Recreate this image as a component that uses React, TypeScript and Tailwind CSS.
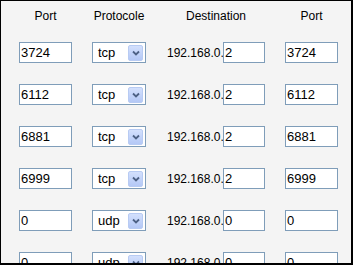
import React from "react";

const rows = [
  ["3724", "tcp", "2", "3724"],
  ["6112", "tcp", "2", "6112"],
  ["6881", "tcp", "2", "6881"],
  ["6999", "tcp", "2", "6999"],
  ["0", "udp", "0", "0"],
  ["0", "udp", "0", "0"],
];

function Box({ w, children }: { w: string; children: React.ReactNode }) {
  return (
    <div
      className={`${w} h-[21px] shrink-0 border border-[#7f9db9] bg-white pl-[1px] text-[13px] leading-[19px] text-black`}
    >
      {children}
    </div>
  );
}

function Select({ value }: { value: string }) {
  return (
    <div className="flex h-[21px] w-[54px] shrink-0 items-center justify-between border border-[#7f9db9] bg-white pl-[5px] pr-[2px] text-[13px] text-black">
      <span className="leading-[19px]">{value}</span>
      <div className="flex h-[16px] w-[15px] items-center justify-center rounded-[2px] border border-[#b8cbf3] bg-gradient-to-b from-[#d3e0fd] to-[#b4c8f6]">
        <svg width="8" height="6" viewBox="0 0 8 6">
          <polyline points="1,1.5 4,4.5 7,1.5" fill="none" stroke="#4d6185" strokeWidth="1.8" />
        </svg>
      </div>
    </div>
  );
}

export default function App() {
  return (
    <div
      className="h-[265px] w-[353px] overflow-hidden border-b-2 border-l border-r-2 border-t border-black bg-[#f4f4f4]"
      style={{ fontFamily: '"Liberation Sans", Arial, sans-serif' }}
    >
      <div className="flex pl-[18px] pt-[7px] text-[12px] leading-[16px] text-black">
        <div className="w-[53px] text-center">Port</div>
        <div className="ml-[20px] w-[54px] text-center">Protocole</div>
        <div className="ml-[21px] w-[98px] text-center">Destination</div>
        <div className="ml-[20px] w-[53px] text-center">Port</div>
      </div>
      <div className="mt-[18px] flex flex-col gap-[21px] pl-[18px]">
        {rows.map((r, i) => (
          <div key={i} className="flex items-center">
            <Box w="w-[53px]">{r[0]}</Box>
            <div className="ml-[20px]">
              <Select value={r[1]} />
            </div>
            <div className="ml-[21px] flex w-[98px] items-center">
              <span className="w-[56px] shrink-0 text-[12px] text-black">192.168.0.</span>
              <Box w="w-[42px]">{r[2]}</Box>
            </div>
            <div className="ml-[20px]">
              <Box w="w-[53px]">{r[3]}</Box>
            </div>
          </div>
        ))}
      </div>
    </div>
  );
}
